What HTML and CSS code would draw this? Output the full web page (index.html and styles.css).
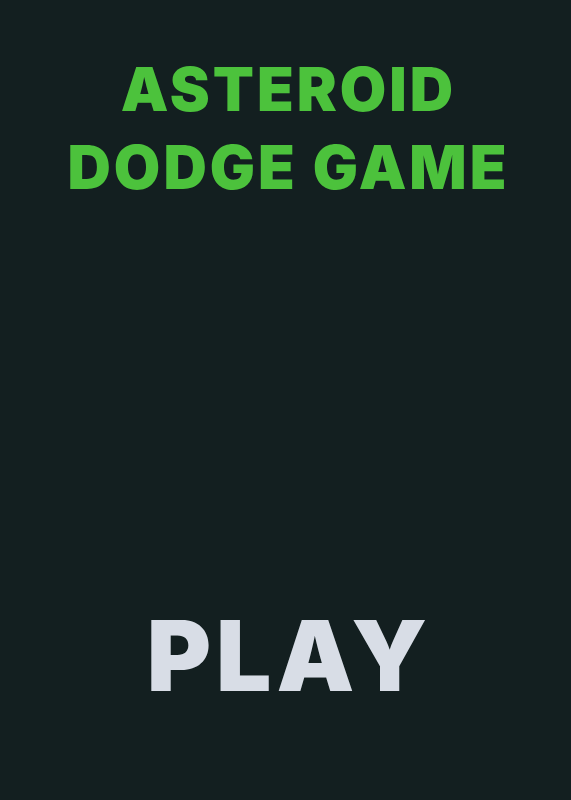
FILE: index.html
```html
<!DOCTYPE html>
<html lang="en">
<head>
    <meta charset="UTF-8">
    <meta name="viewport" content="width=device-width, initial-scale=1.0">
    <title>Asteroid Dodge Game</title>
    <link rel="stylesheet" href="styles.css">
</head>
<body>
    <div class="screen">
        <h1 class="title">ASTEROID<br>DODGE GAME</h1>
        <button class="play-btn">PLAY</button>
    </div>
</body>
</html>
```
FILE: styles.css
```css
* {
    margin: 0;
    padding: 0;
    box-sizing: border-box;
}

body {
    background: #131f20;
    font-family: 'Inter', 'DejaVu Sans', sans-serif;
}

.screen {
    height: 800px;
    display: flex;
    flex-direction: column;
    align-items: center;
    padding-top: 50px;
}

.title {
    color: #4cc23c;
    font-size: 60px;
    font-weight: 900;
    line-height: 78px;
    text-align: center;
    letter-spacing: 3px;
    padding-left: 6px;
}

.play-btn {
    margin-top: 401px;
    padding-left: 8px;
    background: none;
    border: none;
    color: #d8dde6;
    font-family: inherit;
    font-size: 98px;
    font-weight: 900;
    line-height: 1;
    letter-spacing: 5px;
    cursor: pointer;
}
```
